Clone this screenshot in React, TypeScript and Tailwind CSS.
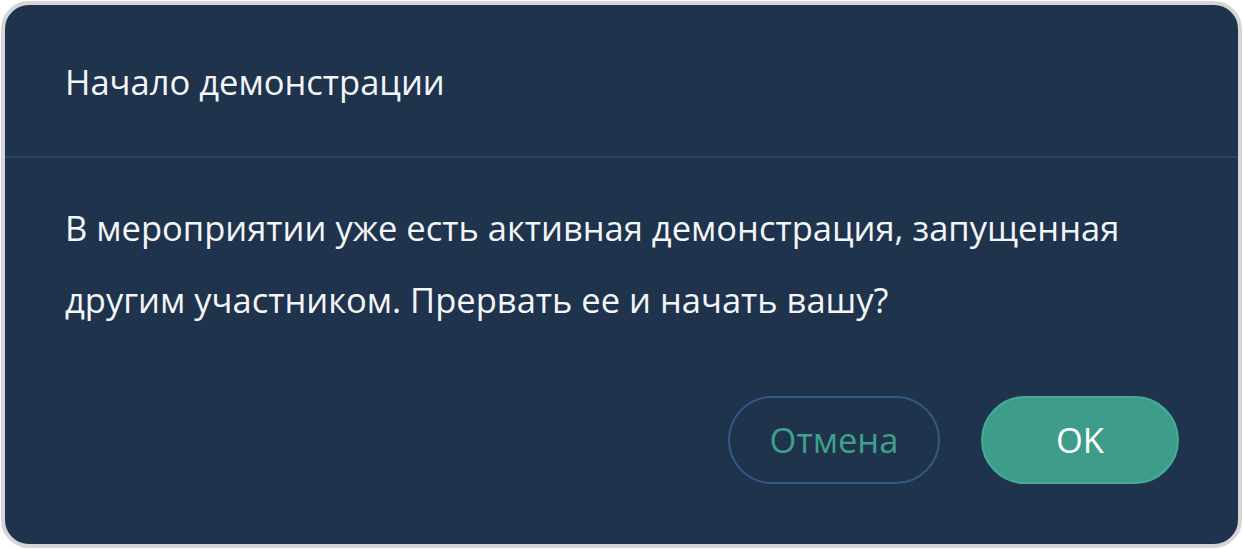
export default function App() {
  return (
    <div className="h-[549px] w-[1243px] bg-white p-px" style={{ fontFamily: '"Open Sans", "Noto Sans", sans-serif' }}>
      <div className="flex h-full w-full flex-col overflow-hidden rounded-[28px] border-4 border-[#d6d6d6] bg-[#20334d] text-[#f3f6f9]">
        <header className="flex h-[151px] shrink-0 items-center px-[60px] pt-[3px] text-[34.5px] leading-[44px]">
          Начало демонстрации
        </header>
        <div className="h-[2px] bg-[#2a4466]" />
        <div className="flex flex-1 flex-col pb-[60px] pl-[60px] pr-[59px] pt-[34px]">
          <p className="text-[34.5px] leading-[72px]">
            В мероприятии уже есть активная демонстрация, запущенная другим участником. Прервать ее и начать вашу?
          </p>
          <div className="mt-auto flex justify-end gap-[41px]">
            <button className="h-[88px] w-[212px] rounded-full border-2 border-[#355985] text-[34.5px] text-[#3fa08c]">
              Отмена
            </button>
            <button className="h-[88px] w-[198px] rounded-full border-2 border-[#49ab97] bg-[#3e9d8a] text-[34.5px] text-white">
              OK
            </button>
          </div>
        </div>
      </div>
    </div>
  );
}
